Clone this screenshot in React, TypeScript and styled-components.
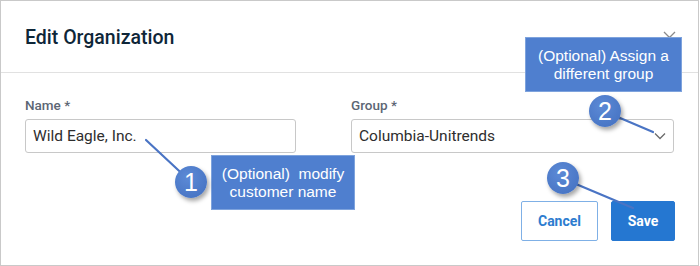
import React from "react";
import styled, { createGlobalStyle } from "styled-components";

const Global = createGlobalStyle`
  html, body { margin: 0; padding: 0; background: #ffffff; }
  body { font-family: Roboto, "Liberation Sans", Arial, sans-serif; }
  * { box-sizing: border-box; }
`;

const Dialog = styled.div`
  position: relative;
  width: 699px;
  height: 266px;
  border: 1.5px solid #c9c9c9;
  background: #fff;
  display: flex;
  flex-direction: column;
`;

const Header = styled.div`
  height: 72px;
  flex: none;
  border-bottom: 1px solid #e1e1e1;
  display: flex;
  align-items: center;
  justify-content: space-between;
  padding: 2px 22px 0 24px;
`;

const Title = styled.h2`
  margin: 0;
  font-size: 19.5px;
  font-weight: 500;
  color: #0e2638;
`;

const CloseButton = styled.button`
  width: 14px;
  height: 14px;
  padding: 0;
  border: none;
  background: none;
  display: flex;
  align-items: center;
  justify-content: center;
  color: #8a8a8a;
`;

const Body = styled.div`
  display: grid;
  grid-template-columns: 271px 323px;
  column-gap: 55px;
  padding: 25px 24px 0 24px;
`;

const Field = styled.div`
  display: flex;
  flex-direction: column;
  gap: 6px;
`;

const Label = styled.label`
  font-size: 13.5px;
  font-weight: 500;
  color: #5c6674;
  line-height: 15px;
`;

const Input = styled.div`
  height: 34px;
  border: 1px solid #c8c8c8;
  border-radius: 3px;
  display: flex;
  align-items: center;
  justify-content: space-between;
  padding: 0 7px 0 7px;
  font-size: 15.5px;
  color: #2e2e2e;
`;

const Footer = styled.div`
  display: flex;
  justify-content: flex-end;
  gap: 13px;
  padding: 48px 23px 0 0;
`;

const Button = styled.button<{ $primary?: boolean }>`
  height: 40px;
  width: ${(p) => (p.$primary ? "64px" : "77px")};
  border-radius: 2px;
  font-family: Roboto, "Liberation Sans", Arial, sans-serif;
  font-size: 14px;
  font-weight: 700;
  border: 1px solid ${(p) => (p.$primary ? "#2577d1" : "#7fb0e6")};
  background: ${(p) => (p.$primary ? "#2577d1" : "#ffffff")};
  color: ${(p) => (p.$primary ? "#ffffff" : "#2d7ccf")};
`;

const Callout = styled.div<{ $x: number; $y: number; $w: number; $h: number }>`
  position: absolute;
  left: ${(p) => p.$x}px;
  top: ${(p) => p.$y}px;
  width: ${(p) => p.$w}px;
  height: ${(p) => p.$h}px;
  background: #4f7fcf;
  border: 1px solid #7ea3dd;
  color: #fff;
  font-family: "Liberation Sans", Arial, sans-serif;
  font-size: 15.5px;
  line-height: 18px;
  text-align: center;
  display: flex;
  align-items: center;
  justify-content: center;
  white-space: pre;
`;

const Badge = styled.div<{ $x: number; $y: number }>`
  position: absolute;
  left: ${(p) => p.$x - 16}px;
  top: ${(p) => p.$y - 16}px;
  width: 32px;
  height: 32px;
  border-radius: 50%;
  background: radial-gradient(circle at 40% 35%, #5c8ad6 0%, #4a77c6 70%, #3f6bb9 100%);
  box-shadow: 2px 3px 4px rgba(0, 0, 0, 0.35);
  color: #fff;
  font-family: "Liberation Sans", Arial, sans-serif;
  font-size: 25px;
  line-height: 32px;
  text-align: center;
`;

const Overlay = styled.svg`
  position: absolute;
  left: 0;
  top: 0;
  pointer-events: none;
`;

export default function App() {
  return (
    <>
      <Global />
      <Dialog>
        <Header>
          <Title>Edit Organization</Title>
          <CloseButton aria-label="close">
            <svg width="13" height="13" viewBox="0 0 13 13">
              <path d="M1 1 L12 12 M12 1 L1 12" stroke="currentColor" strokeWidth="1.3" fill="none" />
            </svg>
          </CloseButton>
        </Header>
        <Body>
          <Field>
            <Label>Name *</Label>
            <Input>Wild Eagle, Inc.</Input>
          </Field>
          <Field>
            <Label>Group *</Label>
            <Input>
              Columbia-Unitrends
              <svg width="12" height="8" viewBox="0 0 12 8">
                <path d="M1 1.5 L6 6.5 L11 1.5" stroke="#6b6b6b" strokeWidth="1.3" fill="none" />
              </svg>
            </Input>
          </Field>
        </Body>
        <Footer>
          <Button>Cancel</Button>
          <Button $primary>Save</Button>
        </Footer>

        <Overlay width="700" height="266">
          <g stroke="#4a74c4" strokeWidth="2.2" strokeLinecap="round">
            <line x1="145" y1="139" x2="190" y2="181" />
            <line x1="605" y1="111" x2="652" y2="131" />
            <line x1="563" y1="178" x2="632" y2="207" />
          </g>
        </Overlay>
        <Callout $x={524} $y={36} $w={157} $h={55}>{"(Optional) Assign a\ndifferent group"}</Callout>
        <Callout $x={210} $y={154} $w={144} $h={55}>{"(Optional)  modify\ncustomer name"}</Callout>
        <Badge $x={190} $y={181}>1</Badge>
        <Badge $x={604} $y={110}>2</Badge>
        <Badge $x={562} $y={177}>3</Badge>
      </Dialog>
    </>
  );
}
